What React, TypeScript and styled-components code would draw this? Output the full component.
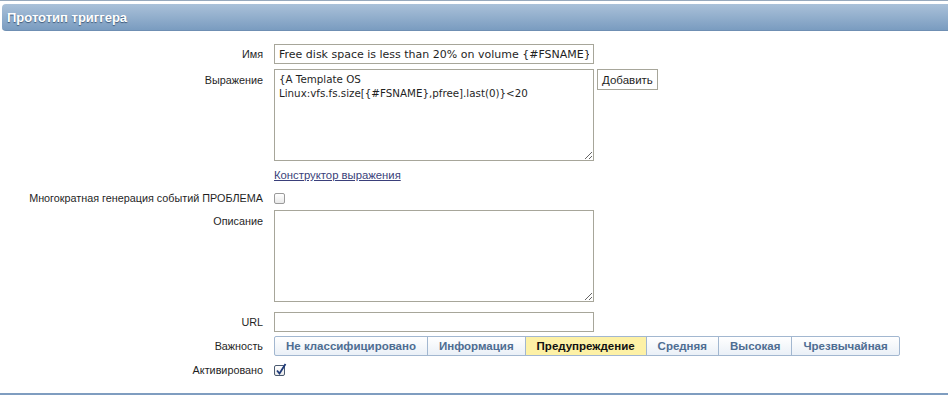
import React from "react";
import styled, { createGlobalStyle } from "styled-components";

const Global = createGlobalStyle`
  html, body { margin: 0; padding: 0; background: #ffffff; }
  body { font-family: "Liberation Sans", Tahoma, sans-serif; font-size: 11px; color: #1f1f1f; }
`;

const Page = styled.div`
  width: 948px;
  height: 395px;
  box-sizing: border-box;
  border-top: 1px solid #97a9bd;
  border-bottom: 2px solid #7f9dc0;
  padding-top: 3px;
  display: flex;
  flex-direction: column;
`;

const Header = styled.div`
  margin-left: 2px;
  height: 26px;
  display: flex;
  align-items: center;
  padding-left: 5px;
  border-radius: 4px 0 0 4px;
  background: linear-gradient(#aac1d9, #7a9cc0);
  border-bottom: 1px solid #6f8fb3;
  color: #ffffff;
  font-family: "Liberation Sans", Tahoma, sans-serif;
  font-weight: bold;
  font-size: 13px;
  text-shadow: 0 1px 1px #3d5878;
`;

const Form = styled.div`
  display: flex;
  flex-direction: column;
  padding-top: 13px;
`;

const Row = styled.div<{ $top?: number }>`
  display: grid;
  grid-template-columns: 274px 1fr;
  margin-top: ${(p) => p.$top ?? 0}px;
  align-items: start;
`;

const Label = styled.div<{ $pad?: number }>`
  text-align: right;
  white-space: nowrap;
  padding-right: 11px;
  padding-top: ${(p) => p.$pad ?? 3}px;
  line-height: 14px;
  font-size: 10.8px;
  color: #1f1f1f;
`;

const Field = styled.div`
  display: flex;
  align-items: flex-start;
  gap: 3px;
`;

const TextInput = styled.input`
  box-sizing: border-box;
  width: 320px;
  height: 20px;
  border: 1px solid #a7a69a;
  padding: 0 4px;
  font-family: "DejaVu Sans", Verdana, sans-serif;
  font-size: 11px;
  color: #1f1f1f;
  outline: none;
  background: #fff;
`;

const TextArea = styled.textarea`
  box-sizing: border-box;
  width: 320px;
  height: 92px;
  border: 1px solid #a7a69a;
  padding: 2px 4px;
  font-family: "DejaVu Sans", Verdana, sans-serif;
  font-size: 10.3px;
  line-height: 14px;
  color: #1f1f1f;
  outline: none;
  resize: both;
  background: #fff;
`;

const PlainButton = styled.button`
  box-sizing: border-box;
  height: 21px;
  padding: 0 4px;
  border: 1px solid #a7a69a;
  background: #fff;
  font-family: "Liberation Sans", Tahoma, sans-serif;
  font-size: 11.5px;
  color: #1f1f1f;
`;

const Link = styled.a`
  color: #3a3f7a;
  text-decoration: underline;
  line-height: 14px;
  font-size: 11.3px;
  cursor: pointer;
`;

const Check = styled.span<{ $on?: boolean }>`
  box-sizing: border-box;
  width: 11px;
  height: 11px;
  margin-top: 2px;
  border: 1px solid ${(p) => (p.$on ? "#4a5a70" : "#9a9a9a")};
  border-radius: 2px;
  background: linear-gradient(#ffffff, #e9e9e9);
  position: relative;
  display: inline-block;
`;

const CheckMark = styled.svg`
  position: absolute;
  left: 0px;
  top: -3px;
`;

const Segments = styled.div`
  display: flex;
`;

const Segment = styled.div<{ $active?: boolean }>`
  box-sizing: border-box;
  height: 20px;
  display: flex;
  align-items: center;
  white-space: nowrap;
  padding: 0 11px;
  border: 1px solid #a2b7d0;
  margin-left: -1px;
  font-weight: bold;
  font-size: 11.5px;
  color: ${(p) => (p.$active ? "#111111" : "#4e6d92")};
  background: ${(p) =>
    p.$active ? "#fdf1a6" : "linear-gradient(#ffffff, #eaf0f7)"};
  &:first-child { margin-left: 0; border-radius: 2px 0 0 2px; }
  &:last-child { border-radius: 0 2px 2px 0; }
`;

const levels = [
  "Не классифицировано",
  "Информация",
  "Предупреждение",
  "Средняя",
  "Высокая",
  "Чрезвычайная",
];

export default function App() {
  return (
    <>
      <Global />
      <Page>
        <Header>Прототип триггера</Header>
        <Form>
          <Row>
            <Label>Имя</Label>
            <Field>
              <TextInput defaultValue="Free disk space is less than 20% on volume {#FSNAME}" />
            </Field>
          </Row>
          <Row $top={5}>
            <Label $pad={4}>Выражение</Label>
            <Field>
              <TextArea defaultValue={"{A Template OS Linux:vfs.fs.size[{#FSNAME},pfree].last(0)}<20"} />
              <PlainButton>Добавить</PlainButton>
            </Field>
          </Row>
          <Row $top={7}>
            <Label />
            <Field>
              <Link>Конструктор выражения</Link>
            </Field>
          </Row>
          <Row $top={9}>
            <Label $pad={0}>Многократная генерация событий ПРОБЛЕМА</Label>
            <Field>
              <Check />
            </Field>
          </Row>
          <Row $top={5}>
            <Label $pad={4}>Описание</Label>
            <Field>
              <TextArea />
            </Field>
          </Row>
          <Row $top={10}>
            <Label>URL</Label>
            <Field>
              <TextInput />
            </Field>
          </Row>
          <Row $top={4}>
            <Label $pad={3}>Важность</Label>
            <Segments>
              {levels.map((l, i) => (
                <Segment key={l} $active={i === 2}>
                  {l}
                </Segment>
              ))}
            </Segments>
          </Row>
          <Row $top={7}>
            <Label $pad={0}>Активировано</Label>
            <Field>
              <Check $on>
                <CheckMark width="12" height="13" viewBox="0 0 12 13">
                  <path d="M2 7.5 L4.5 10.5 L10.5 1" fill="none" stroke="#1f3a78" strokeWidth="1.8" />
                </CheckMark>
              </Check>
            </Field>
          </Row>
        </Form>
      </Page>
    </>
  );
}
